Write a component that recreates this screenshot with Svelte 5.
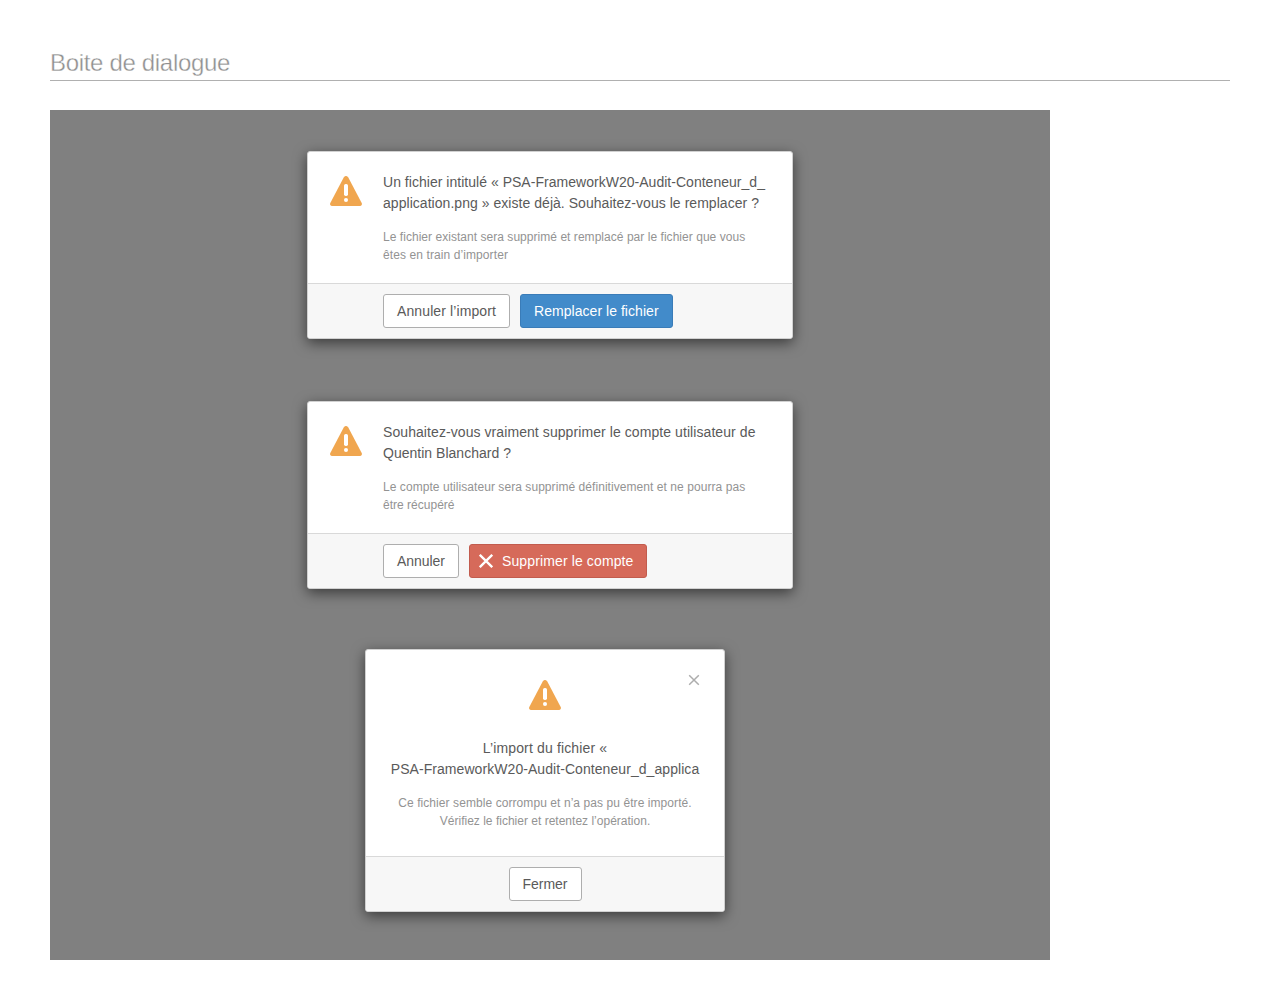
<script>
  const dialogs = [
    {
      kind: 'wide',
      title: [
        { text: 'Un fichier intitulé « PSA-FrameworkW20-Audit-Conteneur_d_', width: 382 },
        { text: 'application.png » existe déjà. Souhaitez-vous le remplacer ?', width: 376 }
      ],
      details: [
        { text: 'Le fichier existant sera supprimé et remplacé par le fichier que vous', width: 362.2 },
        { text: 'êtes en train d’importer', width: 125 }
      ],
      actions: [
        { label: 'Annuler l’import', width: 99, tone: 'plain' },
        { label: 'Remplacer le fichier', width: 124.6, tone: 'primary' }
      ]
    },
    {
      kind: 'wide',
      title: [
        { text: 'Souhaitez-vous vraiment supprimer le compte utilisateur de', width: 372.5 },
        { text: 'Quentin Blanchard ?', width: 128 }
      ],
      details: [
        { text: 'Le compte utilisateur sera supprimé définitivement et ne pourra pas', width: 362.2 },
        { text: 'être récupéré', width: 71.5 }
      ],
      actions: [
        { label: 'Annuler', width: 48, tone: 'plain' },
        { label: 'Supprimer le compte', width: 131.5, tone: 'danger', icon: true }
      ]
    },
    {
      kind: 'compact',
      closable: true,
      title: [
        { text: 'L’import du fichier «', width: 124.5 },
        { text: 'PSA-FrameworkW20-Audit-Conteneur_d_applica', width: 308.5 }
      ],
      details: [
        { text: 'Ce fichier semble corrompu et n’a pas pu être importé.', width: 293.5 },
        { text: 'Vérifiez le fichier et retentez l’opération.', width: 210.5 }
      ],
      actions: [{ label: 'Fermer', width: 45, tone: 'plain' }]
    }
  ];

  // Spreads the letters of a line evenly so that it fills its measure.
  function track(node, width) {
    const natural = node.getBoundingClientRect().width;
    node.style.letterSpacing = `${(width - natural) / node.textContent.length}px`;
  }
</script>

<main>
  <h1><span use:track={180}>Boite de dialogue</span></h1>

  <div class="stage">
    {#each dialogs as dialog}
      <section class="dialog {dialog.kind}">
        <div class="body">
          <svg class="warning" viewBox="0 0 32 30" aria-hidden="true">
            <path d="M13.7 1.4Q16-1.3 18.3 1.4L31.7 26.9Q32.7 29.2 30.3 30H1.7Q-.7 29.2.3 26.9Z" fill="#f0a64f" />
            <rect x="14" y="8" width="4" height="12" rx="1.7" fill="#fff" />
            <circle cx="16" cy="24" r="2.05" fill="#fff" />
          </svg>
          <div class="copy">
            <h2>
              {#each dialog.title as line}
                <span class="line"><span use:track={line.width}>{line.text}</span></span>
              {/each}
            </h2>
            <p>
              {#each dialog.details as line}
                <span class="line"><span use:track={line.width}>{line.text}</span></span>
              {/each}
            </p>
          </div>
          {#if dialog.closable}
            <button class="close" aria-label="Fermer">
              <svg viewBox="0 0 12 12"><path d="M1.2 1.2 10.8 10.8M10.8 1.2 1.2 10.8" /></svg>
            </button>
          {/if}
        </div>
        <footer>
          {#each dialog.actions as action}
            <button class="btn {action.tone}" class:with-icon={action.icon}>
              {#if action.icon}
                <svg class="cross" viewBox="0 0 14 14" aria-hidden="true"><path d="M.8.8 13.2 13.2M13.2.8.8 13.2" /></svg>
              {/if}
              <span use:track={action.width}>{action.label}</span>
            </button>
          {/each}
        </footer>
      </section>
    {/each}
  </div>
</main>

<style>
  :global(body) {
    background: #fff;
  }

  main {
    box-sizing: border-box;
    width: 1280px;
    height: 1000px;
    padding: 44px 50px 40px;
    font-family: 'Liberation Sans', Arial, sans-serif;
    color: #5a5a5a;
  }

  h1 {
    box-sizing: border-box;
    height: 37px;
    margin: 0 0 29px;
    border-bottom: 1px solid #b0b0b0;
    font-size: 24px;
    font-weight: 400;
    line-height: 38px;
    color: #8f8f8f;
    -webkit-text-stroke: 0.35px #fff;
    white-space: nowrap;
  }

  .stage {
    box-sizing: border-box;
    display: flex;
    flex-direction: column;
    align-items: center;
    width: 1000px;
    height: 850px;
    padding-top: 41px;
    background: #808080;
  }

  .dialog {
    box-sizing: border-box;
    overflow: hidden;
    width: 486px;
    margin-bottom: 62px;
    border: 1px solid #d1d1d1;
    border-radius: 3px;
    background: #fff;
    box-shadow: 0 4px 14px rgba(0, 0, 0, 0.55);
  }

  .body {
    position: relative;
    display: flex;
    box-sizing: border-box;
    height: 131px;
    padding: 20px 22px;
  }

  .warning {
    flex: none;
    width: 32px;
    height: 30px;
    margin: 4px 21px 0 0;
  }

  h2,
  p {
    margin: 0;
    font-weight: 400;
  }

  h2 {
    font-size: 14px;
    line-height: 21px;
  }

  p {
    margin-top: 14px;
    font-size: 12px;
    line-height: 18px;
    color: #939393;
  }

  .line {
    display: block;
    white-space: nowrap;
  }

  footer {
    display: flex;
    gap: 10px;
    padding: 10px 10px 10px 75px;
    border-top: 1px solid #d9d9d9;
    background: #f7f7f7;
  }

  .btn {
    display: flex;
    align-items: center;
    box-sizing: border-box;
    height: 34px;
    padding: 0 13px;
    border: 1px solid #aeaeae;
    border-radius: 3px;
    background: #fff;
    font: 14px 'Liberation Sans', Arial, sans-serif;
    color: #5a5a5a;
    white-space: nowrap;
  }

  .primary {
    border-color: #3a7cb8;
    background: #428bca;
    color: #fff;
  }

  .danger {
    border-color: #c25c4e;
    background: #d66a5a;
    color: #fff;
  }

  .with-icon {
    padding: 0 12.5px 0 9px;
  }

  .cross {
    width: 14px;
    height: 14px;
    margin-right: 9px;
    fill: none;
    stroke: #fff;
    stroke-width: 2.3;
  }

  .compact {
    width: 360px;
    margin: -2px 10px 0 0;
  }

  .compact .body {
    flex-direction: column;
    align-items: center;
    height: 206px;
    padding-top: 30px;
    text-align: center;
  }

  .compact .warning {
    margin: 0 0 28px;
  }

  .compact footer {
    justify-content: center;
    padding-left: 10px;
  }

  .close {
    position: absolute;
    top: 24px;
    right: 24px;
    display: flex;
    padding: 0;
    border: 0;
    background: none;
  }

  .close svg {
    width: 12px;
    height: 12px;
    fill: none;
    stroke: #adadad;
    stroke-width: 1.5;
  }
</style>
